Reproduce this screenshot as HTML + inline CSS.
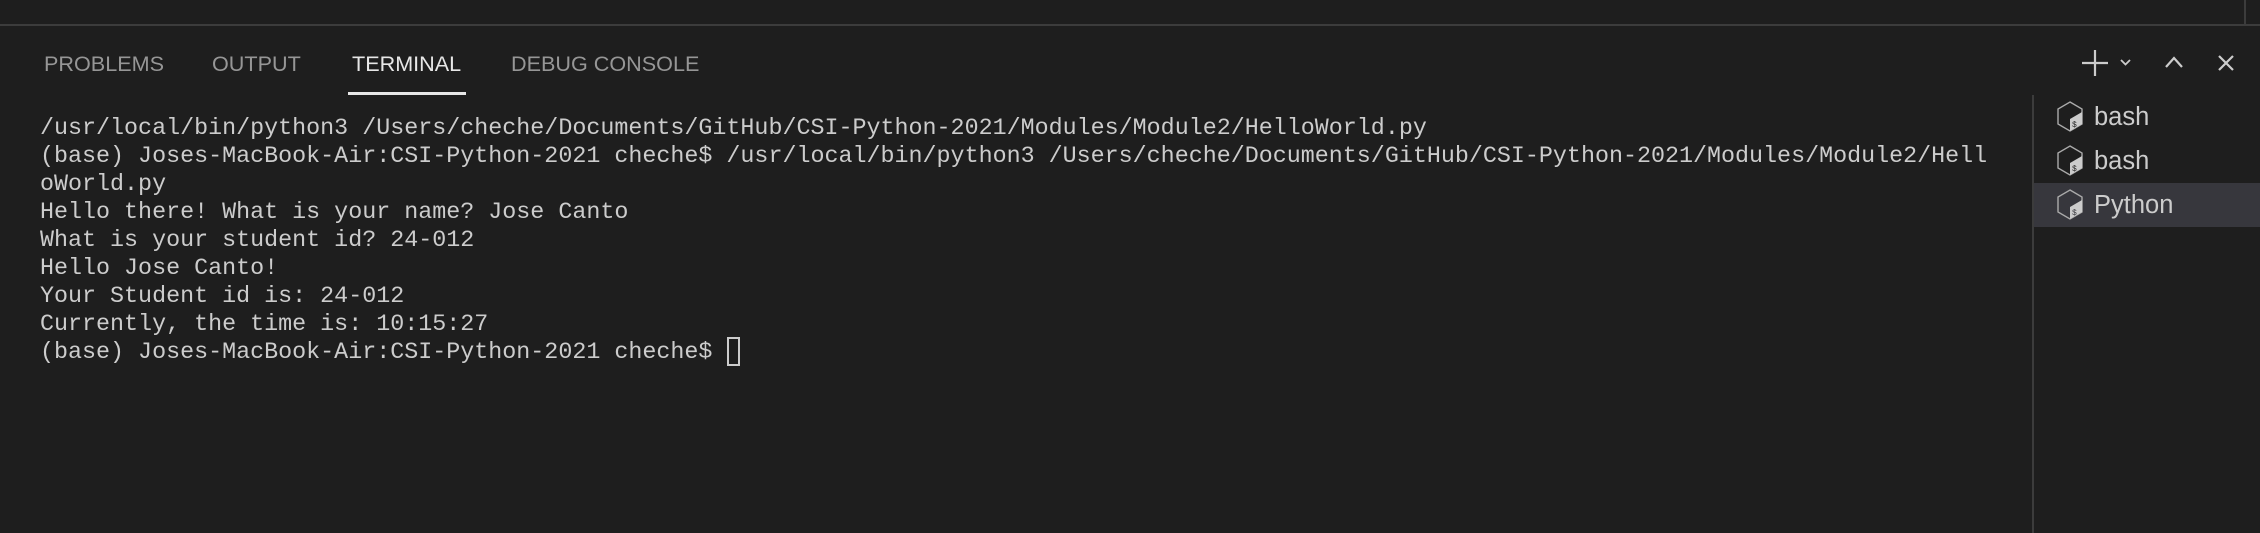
<!DOCTYPE html>
<html><head><style>
html,body{margin:0;padding:0;}
body{width:2260px;height:533px;background:#1e1e1e;position:relative;overflow:hidden;font-family:"Liberation Sans",sans-serif;}
.top{position:absolute;left:0;top:0;width:2260px;height:24px;background:#1e1e1e;border-bottom:2px solid #3c3c3c;}
.vl{position:absolute;left:2244px;top:0;width:2px;height:25px;background:#3c3c3c;}
.tab{position:absolute;top:51px;font-size:21.6px;color:#969696;letter-spacing:0px;white-space:nowrap;}
.act{color:#e7e7e7;}
.ul{position:absolute;left:348px;top:92px;width:118px;height:3px;background:#e7e7e7;}
.term{position:absolute;left:40px;top:114.5px;font-family:"Liberation Mono",monospace;font-size:23.35px;line-height:28px;color:#cccccc;white-space:pre;margin:0;}
.cur{position:absolute;left:727px;top:337px;width:9px;height:25px;border:2px solid #cccccc;}
.div{position:absolute;left:2032px;top:95px;width:2px;height:438px;background:#3c3c3c;}
.sel{position:absolute;left:2034px;top:183px;width:226px;height:44px;background:#37373d;}
.item{position:absolute;left:2094px;font-size:25.5px;color:#cccccc;}
.ic{position:absolute;left:2056px;}
</style></head><body>
<div class="top"></div><div class="vl"></div>
<div class="tab" style="left:44px">PROBLEMS</div>
<div class="tab" style="left:212px">OUTPUT</div>
<div class="tab act" style="left:352px">TERMINAL</div>
<div class="tab" style="left:511px">DEBUG CONSOLE</div>
<div class="ul"></div>
<svg style="position:absolute;left:2078px;top:46px" width="170" height="34" viewBox="0 0 170 34">
<g stroke="#cccccc" stroke-width="2.2" fill="none">
<path d="M17 4V30M4 17H30"/>
<path d="M43 14L47.5 18.5L52 14" stroke-width="1.8"/>
<path d="M88 21L96 12L104 21"/>
<path d="M141 10L155 24M155 10L141 24"/>
</g></svg>
<pre class="term">/usr/local/bin/python3 /Users/cheche/Documents/GitHub/CSI-Python-2021/Modules/Module2/HelloWorld.py
(base) Joses-MacBook-Air:CSI-Python-2021 cheche$ /usr/local/bin/python3 /Users/cheche/Documents/GitHub/CSI-Python-2021/Modules/Module2/Hell
oWorld.py
Hello there! What is your name? Jose Canto
What is your student id? 24-012
Hello Jose Canto!
Your Student id is: 24-012
Currently, the time is: 10:15:27
(base) Joses-MacBook-Air:CSI-Python-2021 cheche$ </pre>
<div class="cur"></div>
<div class="div"></div>
<div class="sel"></div>
<svg class="ic" style="top:101px" width="28" height="32" viewBox="0 0 28 32"><path d="M14 1L26 8V23L14 30L2 23V8Z" fill="none" stroke="#aaaaaa" stroke-width="1.4"/><path d="M26 11V23L14 30V18Z" fill="#cccccc"/><text x="16" y="26" font-size="8" font-family="Liberation Mono" fill="#1e1e1e">$_</text></svg>
<div class="item" style="top:103px">bash</div>
<svg class="ic" style="top:145px" width="28" height="32" viewBox="0 0 28 32"><path d="M14 1L26 8V23L14 30L2 23V8Z" fill="none" stroke="#aaaaaa" stroke-width="1.4"/><path d="M26 11V23L14 30V18Z" fill="#cccccc"/><text x="16" y="26" font-size="8" font-family="Liberation Mono" fill="#1e1e1e">$_</text></svg>
<div class="item" style="top:147px">bash</div>
<svg class="ic" style="top:189px" width="28" height="32" viewBox="0 0 28 32"><path d="M14 1L26 8V23L14 30L2 23V8Z" fill="none" stroke="#aaaaaa" stroke-width="1.4"/><path d="M26 11V23L14 30V18Z" fill="#cccccc"/><text x="16" y="26" font-size="8" font-family="Liberation Mono" fill="#37373d">$_</text></svg>
<div class="item" style="top:191px">Python</div>
</body></html>
